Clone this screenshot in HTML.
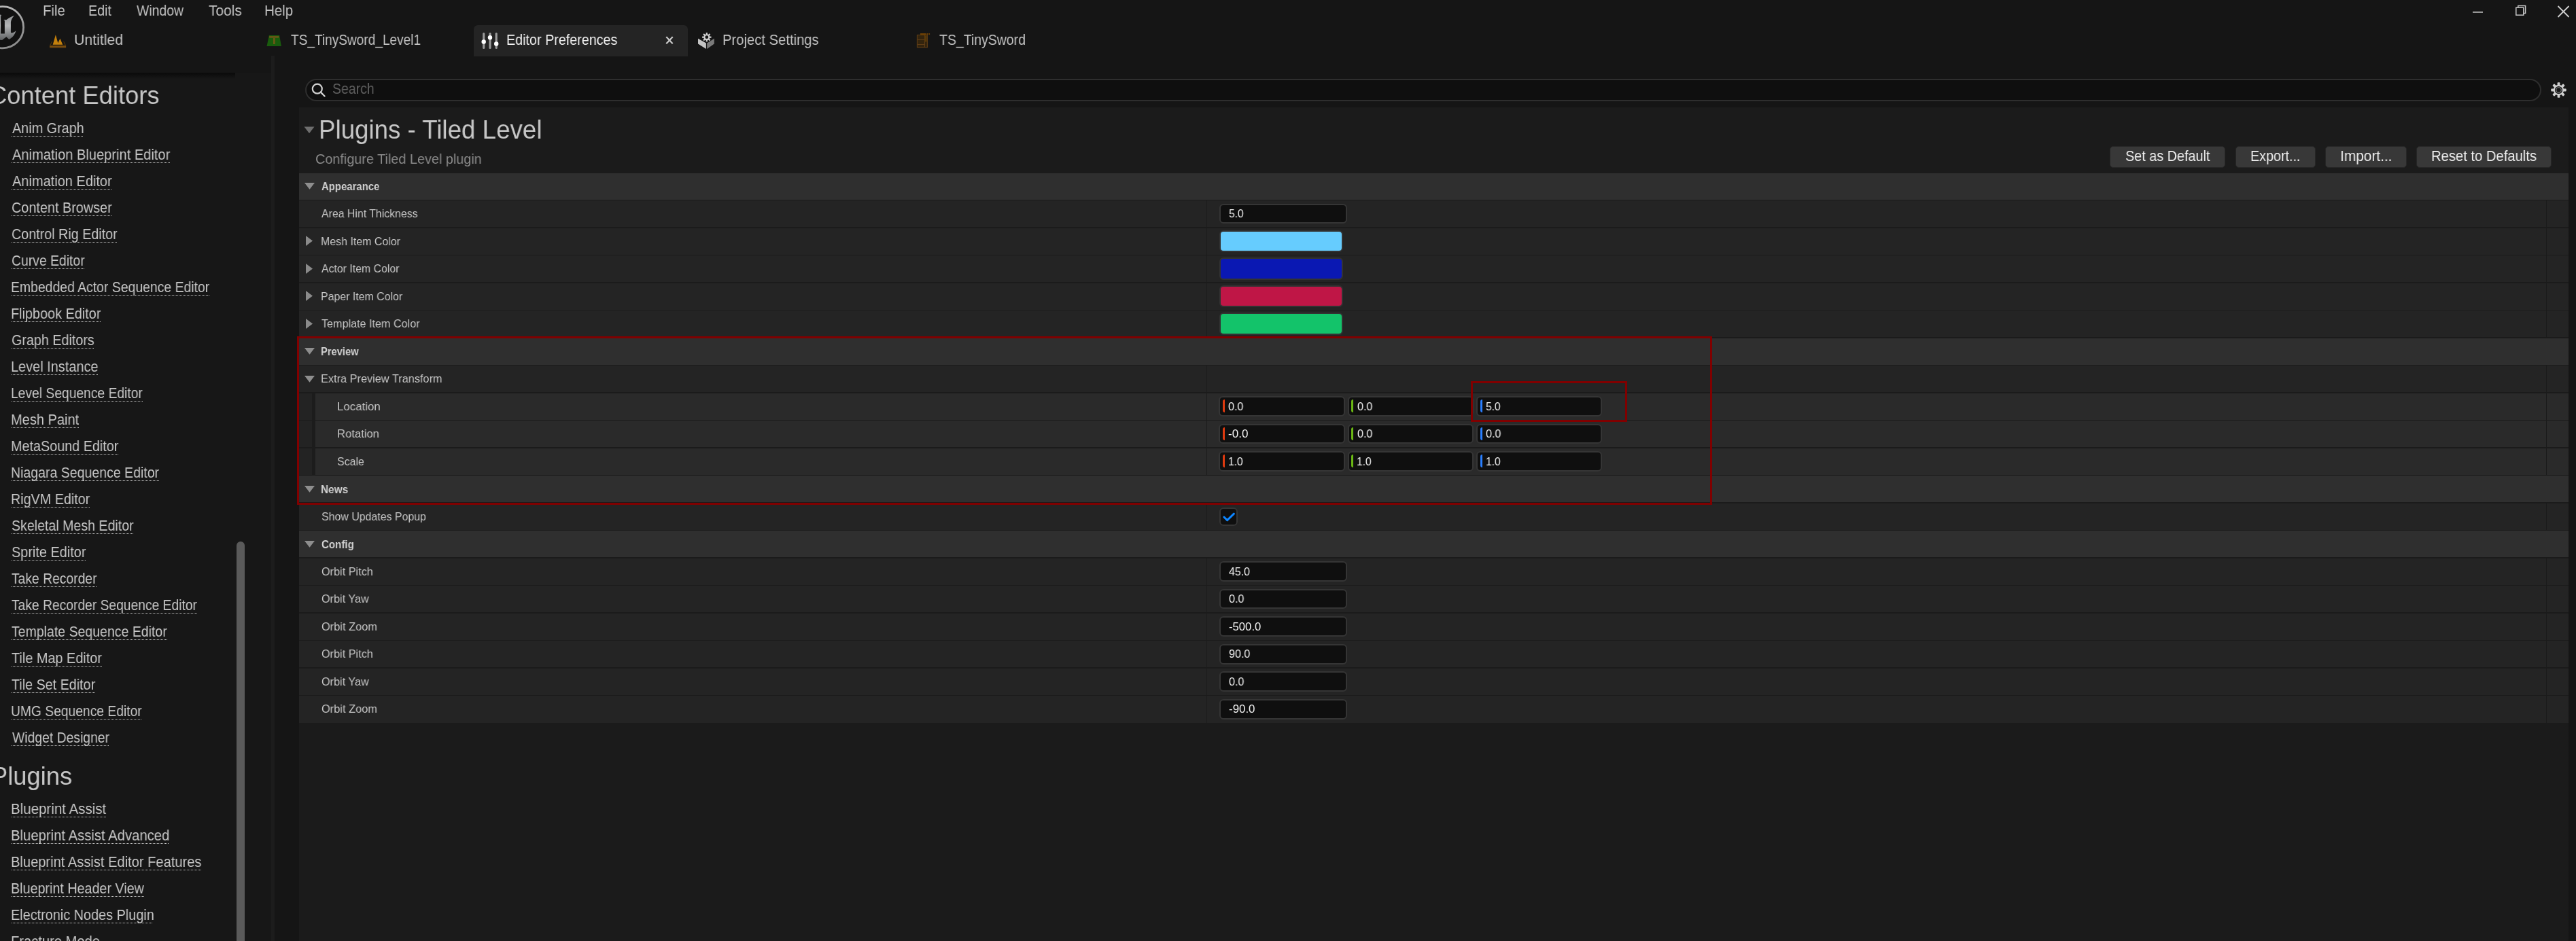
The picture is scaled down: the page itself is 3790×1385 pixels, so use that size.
<!DOCTYPE html>
<html><head><meta charset="utf-8"><title>Editor Preferences</title>
<style>
html,body{margin:0;padding:0;}
body{width:3790px;height:1385px;overflow:hidden;background:#151515;position:relative;font-family:"Liberation Sans",sans-serif;}
.t{position:absolute;white-space:pre;line-height:1;transform-origin:0 0;font-family:"Liberation Sans",sans-serif;will-change:transform;}
.r{position:absolute;}
.a{position:absolute;overflow:visible;}
.u{position:absolute;height:1px;background:repeating-linear-gradient(90deg,#c4c4c4 0 1px,transparent 1px 2px);}
</style></head><body>
<svg class="a" style="left:-30px;top:0px" width="70" height="80" viewBox="-30 0 70 80">
<defs><linearGradient id="ug" x1="0" y1="0" x2="0" y2="1"><stop offset="0" stop-color="#8e9092"/><stop offset="0.45" stop-color="#b4b6b8"/><stop offset="1" stop-color="#5e6163"/></linearGradient>
<linearGradient id="rg" x1="0" y1="0" x2="0.3" y2="1"><stop offset="0" stop-color="#bdbdbd"/><stop offset="1" stop-color="#8d8d8d"/></linearGradient></defs>
<circle cx="4" cy="40.2" r="30.6" fill="#111111" stroke="url(#rg)" stroke-width="2.8"/>
<path d="M-3,21 L2.1,22 L1.1,24.5 L1.1,49.5 L6.9,49.5 L6.9,30.4 L5.3,29 L9.3,29.3 C13,26.5 17,24 21,23 C18.5,25.5 16.5,28.5 15.9,32.5 L15.9,47.5 C16.5,49.5 19.5,48.5 23.4,45.3 C22.5,48.5 21.5,50.5 20.2,52.2 C18,55 15.5,57 13.3,58 L9.3,54.3 L3.2,59 L-3,58.5 Z" fill="url(#ug)"/>
</svg>
<div class="t" style="left:63.12px;top:5.22px;font-size:22.53px;color:#c4c4c4;transform:scaleX(0.9042)">File</div>
<div class="t" style="left:130.22px;top:5.22px;font-size:22.53px;color:#c4c4c4;transform:scaleX(0.8742)">Edit</div>
<div class="t" style="left:201.30px;top:5.22px;font-size:22.53px;color:#c4c4c4;transform:scaleX(0.8628)">Window</div>
<div class="t" style="left:306.58px;top:5.22px;font-size:22.53px;color:#c4c4c4;transform:scaleX(0.9286)">Tools</div>
<div class="t" style="left:389.36px;top:5.22px;font-size:22.53px;color:#c4c4c4;transform:scaleX(0.9107)">Help</div>
<svg class="a" style="left:72px;top:50px" width="27" height="22" viewBox="72 50 27 22">
<defs><linearGradient id="tg" x1="0" y1="0" x2="0" y2="1"><stop offset="0" stop-color="#4a300a"/><stop offset="0.45" stop-color="#7a4e10"/><stop offset="1" stop-color="#6a430d"/></linearGradient></defs>
<path d="M73.1,66.6 L97.1,66.6 L97.1,70.4 L73.1,70.4 Z" fill="url(#tg)"/>
<path d="M73.1,66.8 L76,60.7 L77,60.7 L74.6,66.8 Z" fill="#4f340c"/>
<path d="M97.1,66.8 L94.2,60.9 L93.2,60.9 L95.6,66.8 Z" fill="#4f340c"/>
<path d="M77.7,65.8 L81.9,51.3 L85.3,63.2 L88.4,56.8 L92.3,65.8 Z" fill="#c4800c"/>
</svg>
<div class="t" style="left:109.01px;top:49.29px;font-size:21.51px;color:#c4c4c4;transform:scaleX(0.9884)">Untitled</div>
<svg class="a" style="left:391px;top:50px" width="26" height="20" viewBox="391 50 26 20">
<path d="M395.9,52.1 L411.1,52.1 L413.9,68 L392.5,68 Z" fill="#195c0d"/>
<rect x="396.2" y="53.1" width="14.1" height="2.6" fill="#6a5816"/>
<rect x="402" y="55.7" width="2.8" height="9.3" fill="#6a5816"/>
</svg>
<div class="t" style="left:427.62px;top:49.29px;font-size:21.51px;color:#c4c4c4;transform:scaleX(0.8868)">TS_TinySword_Level1</div>
<div class="r" style="left:697.00px;top:37.00px;width:315.00px;height:46.00px;background:#242424;border-radius:6px 6px 0 0;"></div>
<svg class="a" style="left:705px;top:45px" width="32" height="30" viewBox="705 45 32 30">
<g stroke="#9a9a9a" stroke-width="3.2" stroke-linecap="round"><line x1="711.7" y1="49.5" x2="711.7" y2="70.5"/><line x1="721" y1="49.5" x2="721" y2="70.5"/><line x1="730.2" y1="49.5" x2="730.2" y2="70.5"/></g>
<g fill="#ffffff"><circle cx="711.7" cy="61.5" r="3.2"/><circle cx="721" cy="55.3" r="3.2"/><circle cx="730.2" cy="64.5" r="3.2"/></g>
</svg>
<div class="t" style="left:745.12px;top:49.19px;font-size:21.51px;color:#f2f2f2;transform:scaleX(0.9178)">Editor Preferences</div>
<svg class="a" style="left:977px;top:51px" width="16" height="16" viewBox="977 51 16 16">
<g stroke="#c8c8c8" stroke-width="2.2"><line x1="980.3" y1="54.3" x2="989.7" y2="64.2"/><line x1="989.7" y1="54.3" x2="980.3" y2="64.2"/></g></svg>
<svg class="a" style="left:1025px;top:46px" width="28" height="28" viewBox="1025 46 28 28">
<path d="M1027,56.8 L1038.9,63.6 L1038.9,71.9 L1027,64.4 Z" fill="#c4c4c4"/>
<path d="M1040.2,63.6 L1050.8,56.8 L1050.8,64.4 L1040.2,71.9 Z" fill="#7a7a7a"/>
<g transform="translate(1039.8,54.7)"><g fill="#d0d0d0">
<rect x="-1.1" y="-6.7" width="2.2" height="13.4"/><rect x="-1.1" y="-6.7" width="2.2" height="13.4" transform="rotate(45)"/><rect x="-1.1" y="-6.7" width="2.2" height="13.4" transform="rotate(90)"/><rect x="-1.1" y="-6.7" width="2.2" height="13.4" transform="rotate(135)"/>
<circle r="4.5"/></g><circle r="2.4" fill="#151515"/></g>
</svg>
<div class="t" style="left:1063.38px;top:49.29px;font-size:21.51px;color:#c4c4c4;transform:scaleX(0.9405)">Project Settings</div>
<svg class="a" style="left:1347px;top:48px" width="24" height="24" viewBox="1347 48 24 24">
<rect x="1349.4" y="51.5" width="15" height="18.2" fill="#33240e" stroke="#5e3c16" stroke-width="1.1"/>
<rect x="1354" y="49" width="8.5" height="3" fill="#6a3f05"/><rect x="1363.5" y="49" width="2" height="2" fill="#6a3f05"/><rect x="1366.5" y="49" width="1.6" height="2.2" fill="#6a3f05"/>
<line x1="1350" y1="58.5" x2="1360" y2="58.5" stroke="#5e3c16" stroke-width="1"/><line x1="1350" y1="65.5" x2="1360" y2="65.5" stroke="#5e3c16" stroke-width="1"/>
<line x1="1360.5" y1="52" x2="1360.5" y2="69.5" stroke="#5e3c16" stroke-width="1"/>
<rect x="1360.5" y="52.5" width="3" height="9" fill="#5a3a08"/>
</svg>
<div class="t" style="left:1382.21px;top:49.19px;font-size:21.51px;color:#c4c4c4;transform:scaleX(0.9059)">TS_TinySword</div>
<svg class="a" style="left:3630px;top:0px" width="160" height="34" viewBox="3630 0 160 34">
<line x1="3638" y1="17.9" x2="3653" y2="17.9" stroke="#c8c8c8" stroke-width="1.6"/>
<rect x="3701.8" y="11.2" width="11" height="11" fill="none" stroke="#c8c8c8" stroke-width="1.5"/>
<path d="M3704.8,11.2 L3704.8,8.6 L3715.6,8.6 L3715.6,19.4 L3712.8,19.4" fill="none" stroke="#c8c8c8" stroke-width="1.5"/>
<g stroke="#d0d0d0" stroke-width="1.8"><line x1="3763.5" y1="9" x2="3779.5" y2="25"/><line x1="3779.5" y1="9" x2="3763.5" y2="25"/></g>
</svg>
<div class="r" style="left:0.00px;top:107.00px;width:399.00px;height:1278.00px;background:#171717;"></div>
<div class="r" style="left:0;top:107px;width:346px;height:9px;background:linear-gradient(#0a0a0a,#0d0d0d 25%,#171717);"></div>
<div class="r" style="left:399.00px;top:82.00px;width:5.00px;height:1303.00px;background:#1c1c1c;"></div>
<div class="r" style="left:348.00px;top:797.00px;width:12.00px;height:600.00px;background:#5a5a5a;border-radius:6px;"></div>
<div class="t" style="left:-16.09px;top:122.20px;font-size:37.79px;color:#c8c8c8;transform:scaleX(0.9620)">Content Editors</div>
<div class="t" style="left:-12.57px;top:1123.50px;font-size:37.79px;color:#c8c8c8;transform:scaleX(0.9620)">Plugins</div>
<div class="t" style="left:17.60px;top:178.17px;font-size:22.24px;color:#c8c8c8;transform:scaleX(0.8908)">Anim Graph</div>
<div class="u" style="left:17px;top:200px;width:105px"></div>
<div class="t" style="left:17.60px;top:217.17px;font-size:22.24px;color:#c8c8c8;transform:scaleX(0.9036)">Animation Blueprint Editor</div>
<div class="u" style="left:17px;top:239px;width:233px"></div>
<div class="t" style="left:17.60px;top:256.17px;font-size:22.24px;color:#c8c8c8;transform:scaleX(0.8993)">Animation Editor</div>
<div class="u" style="left:17px;top:278px;width:147px"></div>
<div class="t" style="left:16.61px;top:295.17px;font-size:22.24px;color:#c8c8c8;transform:scaleX(0.8920)">Content Browser</div>
<div class="u" style="left:17px;top:317px;width:147px"></div>
<div class="t" style="left:16.61px;top:334.17px;font-size:22.24px;color:#c8c8c8;transform:scaleX(0.8873)">Control Rig Editor</div>
<div class="u" style="left:17px;top:356px;width:155px"></div>
<div class="t" style="left:16.63px;top:373.17px;font-size:22.24px;color:#c8c8c8;transform:scaleX(0.8715)">Curve Editor</div>
<div class="u" style="left:17px;top:395px;width:107px"></div>
<div class="t" style="left:16.05px;top:412.17px;font-size:22.24px;color:#c8c8c8;transform:scaleX(0.8723)">Embedded Actor Sequence Editor</div>
<div class="u" style="left:17px;top:434px;width:291px"></div>
<div class="t" style="left:16.01px;top:451.17px;font-size:22.24px;color:#c8c8c8;transform:scaleX(0.8925)">Flipbook Editor</div>
<div class="u" style="left:17px;top:473px;width:131px"></div>
<div class="t" style="left:16.61px;top:490.17px;font-size:22.24px;color:#c8c8c8;transform:scaleX(0.8875)">Graph Editors</div>
<div class="u" style="left:17px;top:512px;width:121px"></div>
<div class="t" style="left:16.01px;top:529.17px;font-size:22.24px;color:#c8c8c8;transform:scaleX(0.8965)">Level Instance</div>
<div class="u" style="left:17px;top:551px;width:127px"></div>
<div class="t" style="left:16.06px;top:568.17px;font-size:22.24px;color:#c8c8c8;transform:scaleX(0.8664)">Level Sequence Editor</div>
<div class="u" style="left:17px;top:590px;width:193px"></div>
<div class="t" style="left:16.00px;top:607.17px;font-size:22.24px;color:#c8c8c8;transform:scaleX(0.9003)">Mesh Paint</div>
<div class="u" style="left:17px;top:629px;width:99px"></div>
<div class="t" style="left:16.02px;top:646.17px;font-size:22.24px;color:#c8c8c8;transform:scaleX(0.8897)">MetaSound Editor</div>
<div class="u" style="left:17px;top:668px;width:157px"></div>
<div class="t" style="left:16.04px;top:685.17px;font-size:22.24px;color:#c8c8c8;transform:scaleX(0.8778)">Niagara Sequence Editor</div>
<div class="u" style="left:17px;top:707px;width:217px"></div>
<div class="t" style="left:16.02px;top:724.17px;font-size:22.24px;color:#c8c8c8;transform:scaleX(0.8877)">RigVM Editor</div>
<div class="u" style="left:17px;top:746px;width:115px"></div>
<div class="t" style="left:16.72px;top:763.17px;font-size:22.24px;color:#c8c8c8;transform:scaleX(0.8806)">Skeletal Mesh Editor</div>
<div class="u" style="left:17px;top:785px;width:179px"></div>
<div class="t" style="left:16.70px;top:802.17px;font-size:22.24px;color:#c8c8c8;transform:scaleX(0.8944)">Sprite Editor</div>
<div class="u" style="left:17px;top:824px;width:109px"></div>
<div class="t" style="left:17.21px;top:841.17px;font-size:22.24px;color:#c8c8c8;transform:scaleX(0.8680)">Take Recorder</div>
<div class="u" style="left:17px;top:863px;width:125px"></div>
<div class="t" style="left:17.21px;top:880.17px;font-size:22.24px;color:#c8c8c8;transform:scaleX(0.8659)">Take Recorder Sequence Editor</div>
<div class="u" style="left:17px;top:902px;width:273px"></div>
<div class="t" style="left:17.21px;top:919.17px;font-size:22.24px;color:#c8c8c8;transform:scaleX(0.8770)">Template Sequence Editor</div>
<div class="u" style="left:17px;top:941px;width:229px"></div>
<div class="t" style="left:17.20px;top:958.17px;font-size:22.24px;color:#c8c8c8;transform:scaleX(0.8939)">Tile Map Editor</div>
<div class="u" style="left:17px;top:980px;width:133px"></div>
<div class="t" style="left:17.21px;top:997.17px;font-size:22.24px;color:#c8c8c8;transform:scaleX(0.8870)">Tile Set Editor</div>
<div class="u" style="left:17px;top:1019px;width:123px"></div>
<div class="t" style="left:16.16px;top:1036.17px;font-size:22.24px;color:#c8c8c8;transform:scaleX(0.8662)">UMG Sequence Editor</div>
<div class="u" style="left:17px;top:1058px;width:192px"></div>
<div class="t" style="left:17.50px;top:1075.17px;font-size:22.24px;color:#c8c8c8;transform:scaleX(0.8701)">Widget Designer</div>
<div class="u" style="left:17px;top:1097px;width:143px"></div>
<div class="t" style="left:15.96px;top:1179.67px;font-size:22.24px;color:#c8c8c8;transform:scaleX(0.9220)">Blueprint Assist</div>
<div class="u" style="left:17px;top:1202px;width:139px"></div>
<div class="t" style="left:15.98px;top:1218.67px;font-size:22.24px;color:#c8c8c8;transform:scaleX(0.9120)">Blueprint Assist Advanced</div>
<div class="u" style="left:17px;top:1241px;width:231px"></div>
<div class="t" style="left:15.99px;top:1257.67px;font-size:22.24px;color:#c8c8c8;transform:scaleX(0.9042)">Blueprint Assist Editor Features</div>
<div class="u" style="left:17px;top:1280px;width:279px"></div>
<div class="t" style="left:16.02px;top:1296.67px;font-size:22.24px;color:#c8c8c8;transform:scaleX(0.8870)">Blueprint Header View</div>
<div class="u" style="left:17px;top:1319px;width:195px"></div>
<div class="t" style="left:16.01px;top:1335.67px;font-size:22.24px;color:#c8c8c8;transform:scaleX(0.8929)">Electronic Nodes Plugin</div>
<div class="u" style="left:17px;top:1358px;width:208px"></div>
<div class="t" style="left:15.99px;top:1374.67px;font-size:22.24px;color:#c8c8c8;transform:scaleX(0.9057)">Fracture Mode</div>
<div class="u" style="left:17px;top:1397px;width:129px"></div>
<div class="r" style="left:440.00px;top:158.00px;width:3339.00px;height:1227.00px;background:#1b1b1b;"></div>
<div class="r" style="left:449.00px;top:116.30px;width:3290.00px;height:32.60px;background:#0f0f0f;border:2px solid #2e2e2e;border-radius:17px;box-sizing:border-box;"></div>
<svg class="a" style="left:455px;top:119px" width="28" height="28" viewBox="455 119 28 28">
<circle cx="466.8" cy="130.7" r="7" fill="none" stroke="#d0d0d0" stroke-width="2.2"/>
<line x1="472" y1="135.9" x2="477.6" y2="141.5" stroke="#d0d0d0" stroke-width="2.4" stroke-linecap="round"/></svg>
<div class="t" style="left:489.12px;top:119.56px;font-size:21.66px;color:#606060;transform:scaleX(0.8993)">Search</div>
<svg class="a" style="left:3749.6px;top:117.5px" width="29" height="29" viewBox="-14.5 -14.5 29 29">
<g fill="#cfcfcf"><rect x="-1.9" y="-11.2" width="3.8" height="22.4" rx="0.9"/><rect x="-1.9" y="-11.2" width="3.8" height="22.4" rx="0.9" transform="rotate(45)"/><rect x="-1.9" y="-11.2" width="3.8" height="22.4" rx="0.9" transform="rotate(90)"/><rect x="-1.9" y="-11.2" width="3.8" height="22.4" rx="0.9" transform="rotate(135)"/>
<circle r="7.7"/></g><circle r="5.6" fill="#151515"/><circle r="4.3" fill="#8a8a8a"/><circle r="3.2" fill="#151515"/></svg>
<svg class="a" style="left:446px;top:185px" width="18" height="13" viewBox="446 185 18 13"><path d="M447.5,186.4 L462.5,186.4 L455,196.2 Z" fill="#6e6e6e"/></svg>
<div class="t" style="left:468.86px;top:170.97px;font-size:39.24px;color:#c8c8c8;transform:scaleX(0.9353)">Plugins - Tiled Level</div>
<div class="t" style="left:463.81px;top:223.82px;font-size:20.64px;color:#8c8c8c;transform:scaleX(0.9615)">Configure Tiled Level plugin</div>
<div class="r" style="left:3104.10px;top:214.60px;width:170.40px;height:32.00px;background:#383838;border:1px solid #262626;border-radius:5px;box-sizing:border-box;"></div>
<div class="t" style="left:3127.01px;top:218.87px;font-size:22.24px;color:#f0f0f0;transform:scaleX(0.8907)">Set as Default</div>
<div class="r" style="left:3289.30px;top:214.60px;width:117.50px;height:32.00px;background:#383838;border:1px solid #262626;border-radius:5px;box-sizing:border-box;"></div>
<div class="t" style="left:3311.42px;top:218.87px;font-size:22.24px;color:#f0f0f0;transform:scaleX(0.8867)">Export...</div>
<div class="r" style="left:3421.20px;top:214.60px;width:119.60px;height:32.00px;background:#383838;border:1px solid #262626;border-radius:5px;box-sizing:border-box;"></div>
<div class="t" style="left:3442.82px;top:218.87px;font-size:22.24px;color:#f0f0f0;transform:scaleX(0.9381)">Import...</div>
<div class="r" style="left:3555.00px;top:214.60px;width:198.60px;height:32.00px;background:#383838;border:1px solid #262626;border-radius:5px;box-sizing:border-box;"></div>
<div class="t" style="left:3576.68px;top:218.87px;font-size:22.24px;color:#f0f0f0;transform:scaleX(0.9089)">Reset to Defaults</div>
<div class="r" style="left:440.00px;top:254.60px;width:3339.00px;height:39.02px;background:#2f2f2f;"></div>
<svg class="a" style="left:446.50px;top:268.10px" width="17" height="12" viewBox="0 0 17 12"><path d="M1,1 L16,1 L8.5,10.8 Z" fill="#8e8e8e"/></svg>
<div class="t" style="left:473.03px;top:266.09px;font-size:16.42px;color:#d2d2d2;font-weight:700;transform:scaleX(0.9084)">Appearance</div>
<div class="r" style="left:440.00px;top:295.12px;width:3339.00px;height:39.02px;background:#242424;"></div>
<div class="r" style="left:1775.00px;top:295.12px;width:1.00px;height:39.02px;background:#1b1b1b;"></div>
<div class="r" style="left:3746.00px;top:295.12px;width:1.20px;height:39.02px;background:#1b1b1b;"></div>
<div class="t" style="left:473.40px;top:306.00px;font-size:17.15px;color:#c8c8c8;transform:scaleX(0.9249)">Area Hint Thickness</div>
<div class="r" style="left:1793.70px;top:299.62px;width:188.50px;height:29.60px;background:#0f0f0f;border:2px solid #353535;border-radius:6px;box-sizing:border-box;"></div>
<div class="t" style="left:1807.68px;top:307.09px;font-size:16.57px;color:#f4f4f4;transform:scaleX(0.9408)">5.0</div>
<div class="r" style="left:440.00px;top:335.64px;width:3339.00px;height:39.02px;background:#242424;"></div>
<div class="r" style="left:1775.00px;top:335.64px;width:1.00px;height:39.02px;background:#1b1b1b;"></div>
<div class="r" style="left:3746.00px;top:335.64px;width:1.20px;height:39.02px;background:#1b1b1b;"></div>
<svg class="a" style="left:449.00px;top:346.44px" width="12" height="17" viewBox="0 0 12 17"><path d="M1,1 L11,8.5 L1,16 Z" fill="#8a8a8a"/></svg>
<div class="t" style="left:472.12px;top:346.52px;font-size:17.15px;color:#c8c8c8;transform:scaleX(0.9301)">Mesh Item Color</div>
<div class="r" style="left:1794.30px;top:338.84px;width:182.00px;height:32.40px;background:#66ccfe;border:2px solid #323232;border-radius:6px;box-sizing:border-box;"></div>
<div class="r" style="left:440.00px;top:376.16px;width:3339.00px;height:39.02px;background:#242424;"></div>
<div class="r" style="left:1775.00px;top:376.16px;width:1.00px;height:39.02px;background:#1b1b1b;"></div>
<div class="r" style="left:3746.00px;top:376.16px;width:1.20px;height:39.02px;background:#1b1b1b;"></div>
<svg class="a" style="left:449.00px;top:386.96px" width="12" height="17" viewBox="0 0 12 17"><path d="M1,1 L11,8.5 L1,16 Z" fill="#8a8a8a"/></svg>
<div class="t" style="left:473.40px;top:387.04px;font-size:17.15px;color:#c8c8c8;transform:scaleX(0.9250)">Actor Item Color</div>
<div class="r" style="left:1794.30px;top:379.36px;width:182.00px;height:32.40px;background:#0a18b3;border:2px solid #323232;border-radius:6px;box-sizing:border-box;"></div>
<div class="r" style="left:440.00px;top:416.68px;width:3339.00px;height:39.02px;background:#242424;"></div>
<div class="r" style="left:1775.00px;top:416.68px;width:1.00px;height:39.02px;background:#1b1b1b;"></div>
<div class="r" style="left:3746.00px;top:416.68px;width:1.20px;height:39.02px;background:#1b1b1b;"></div>
<svg class="a" style="left:449.00px;top:427.48px" width="12" height="17" viewBox="0 0 12 17"><path d="M1,1 L11,8.5 L1,16 Z" fill="#8a8a8a"/></svg>
<div class="t" style="left:472.13px;top:427.56px;font-size:17.15px;color:#c8c8c8;transform:scaleX(0.9277)">Paper Item Color</div>
<div class="r" style="left:1794.30px;top:419.88px;width:182.00px;height:32.40px;background:#bf1646;border:2px solid #323232;border-radius:6px;box-sizing:border-box;"></div>
<div class="r" style="left:440.00px;top:457.20px;width:3339.00px;height:39.02px;background:#242424;"></div>
<div class="r" style="left:1775.00px;top:457.20px;width:1.00px;height:39.02px;background:#1b1b1b;"></div>
<div class="r" style="left:3746.00px;top:457.20px;width:1.20px;height:39.02px;background:#1b1b1b;"></div>
<svg class="a" style="left:449.00px;top:468.00px" width="12" height="17" viewBox="0 0 12 17"><path d="M1,1 L11,8.5 L1,16 Z" fill="#8a8a8a"/></svg>
<div class="t" style="left:473.08px;top:468.08px;font-size:17.15px;color:#c8c8c8;transform:scaleX(0.9423)">Template Item Color</div>
<div class="r" style="left:1794.30px;top:460.40px;width:182.00px;height:32.40px;background:#13c36a;border:2px solid #323232;border-radius:6px;box-sizing:border-box;"></div>
<div class="r" style="left:440.00px;top:497.72px;width:3339.00px;height:39.02px;background:#2f2f2f;"></div>
<svg class="a" style="left:446.50px;top:511.22px" width="17" height="12" viewBox="0 0 17 12"><path d="M1,1 L16,1 L8.5,10.8 Z" fill="#8e8e8e"/></svg>
<div class="t" style="left:472.44px;top:509.21px;font-size:16.42px;color:#d2d2d2;font-weight:700;transform:scaleX(0.8953)">Preview</div>
<div class="r" style="left:440.00px;top:538.24px;width:3339.00px;height:39.02px;background:#242424;"></div>
<div class="r" style="left:1775.00px;top:538.24px;width:1.00px;height:39.02px;background:#1b1b1b;"></div>
<div class="r" style="left:3746.00px;top:538.24px;width:1.20px;height:39.02px;background:#1b1b1b;"></div>
<svg class="a" style="left:446.50px;top:551.74px" width="17" height="12" viewBox="0 0 17 12"><path d="M1,1 L16,1 L8.5,10.8 Z" fill="#8e8e8e"/></svg>
<div class="t" style="left:472.09px;top:549.12px;font-size:17.15px;color:#c8c8c8;transform:scaleX(0.9519)">Extra Preview Transform</div>
<div class="r" style="left:440.00px;top:578.76px;width:3339.00px;height:39.02px;background:#232323;"></div>
<div class="r" style="left:459.00px;top:578.76px;width:5.00px;height:40.52px;background:#1c1c1c;"></div>
<div class="r" style="left:464.00px;top:578.76px;width:3315.00px;height:39.02px;background:#2a2a2a;"></div>
<div class="r" style="left:1775.00px;top:578.76px;width:1.00px;height:39.02px;background:#1b1b1b;"></div>
<div class="r" style="left:3746.00px;top:578.76px;width:1.20px;height:39.02px;background:#1b1b1b;"></div>
<div class="t" style="left:495.85px;top:589.64px;font-size:17.15px;color:#c8c8c8;transform:scaleX(0.9832)">Location</div>
<div class="r" style="left:1793.20px;top:583.26px;width:185.60px;height:29.60px;background:#0f0f0f;border:2px solid #353535;border-radius:6px;box-sizing:border-box;"></div>
<div class="r" style="left:1798.60px;top:588.26px;width:3px;height:19px;background:#e03a0f;border-radius:3px 0 0 3px;"></div>
<div class="t" style="left:1807.16px;top:590.73px;font-size:16.57px;color:#f4f4f4;transform:scaleX(0.9730)">0.0</div>
<div class="r" style="left:1982.70px;top:583.26px;width:185.10px;height:29.60px;background:#0f0f0f;border:2px solid #353535;border-radius:6px;box-sizing:border-box;"></div>
<div class="r" style="left:1988.10px;top:588.26px;width:3px;height:19px;background:#6bb814;border-radius:3px 0 0 3px;"></div>
<div class="t" style="left:1996.66px;top:590.73px;font-size:16.57px;color:#f4f4f4;transform:scaleX(0.9730)">0.0</div>
<div class="r" style="left:2172.40px;top:583.26px;width:184.80px;height:29.60px;background:#0f0f0f;border:2px solid #353535;border-radius:6px;box-sizing:border-box;"></div>
<div class="r" style="left:2177.80px;top:588.26px;width:3px;height:19px;background:#2a7fff;border-radius:3px 0 0 3px;"></div>
<div class="t" style="left:2186.38px;top:590.73px;font-size:16.57px;color:#f4f4f4;transform:scaleX(0.9408)">5.0</div>
<div class="r" style="left:440.00px;top:619.28px;width:3339.00px;height:39.02px;background:#232323;"></div>
<div class="r" style="left:459.00px;top:619.28px;width:5.00px;height:40.52px;background:#1c1c1c;"></div>
<div class="r" style="left:464.00px;top:619.28px;width:3315.00px;height:39.02px;background:#2a2a2a;"></div>
<div class="r" style="left:1775.00px;top:619.28px;width:1.00px;height:39.02px;background:#1b1b1b;"></div>
<div class="r" style="left:3746.00px;top:619.28px;width:1.20px;height:39.02px;background:#1b1b1b;"></div>
<div class="t" style="left:495.87px;top:630.16px;font-size:17.15px;color:#c8c8c8;transform:scaleX(0.9707)">Rotation</div>
<div class="r" style="left:1793.20px;top:623.78px;width:185.60px;height:29.60px;background:#0f0f0f;border:2px solid #353535;border-radius:6px;box-sizing:border-box;"></div>
<div class="r" style="left:1798.60px;top:628.78px;width:3px;height:19px;background:#e03a0f;border-radius:3px 0 0 3px;"></div>
<div class="t" style="left:1807.03px;top:631.25px;font-size:16.57px;color:#f4f4f4;transform:scaleX(1.0304)">-0.0</div>
<div class="r" style="left:1982.70px;top:623.78px;width:185.10px;height:29.60px;background:#0f0f0f;border:2px solid #353535;border-radius:6px;box-sizing:border-box;"></div>
<div class="r" style="left:1988.10px;top:628.78px;width:3px;height:19px;background:#6bb814;border-radius:3px 0 0 3px;"></div>
<div class="t" style="left:1996.66px;top:631.25px;font-size:16.57px;color:#f4f4f4;transform:scaleX(0.9730)">0.0</div>
<div class="r" style="left:2172.40px;top:623.78px;width:184.80px;height:29.60px;background:#0f0f0f;border:2px solid #353535;border-radius:6px;box-sizing:border-box;"></div>
<div class="r" style="left:2177.80px;top:628.78px;width:3px;height:19px;background:#2a7fff;border-radius:3px 0 0 3px;"></div>
<div class="t" style="left:2186.36px;top:631.25px;font-size:16.57px;color:#f4f4f4;transform:scaleX(0.9730)">0.0</div>
<div class="r" style="left:440.00px;top:659.80px;width:3339.00px;height:39.02px;background:#232323;"></div>
<div class="r" style="left:459.00px;top:659.80px;width:5.00px;height:40.52px;background:#1c1c1c;"></div>
<div class="r" style="left:464.00px;top:659.80px;width:3315.00px;height:39.02px;background:#2a2a2a;"></div>
<div class="r" style="left:1775.00px;top:659.80px;width:1.00px;height:39.02px;background:#1b1b1b;"></div>
<div class="r" style="left:3746.00px;top:659.80px;width:1.20px;height:39.02px;background:#1b1b1b;"></div>
<div class="t" style="left:496.48px;top:670.68px;font-size:17.15px;color:#c8c8c8;transform:scaleX(0.9314)">Scale</div>
<div class="r" style="left:1793.20px;top:664.30px;width:185.60px;height:29.60px;background:#0f0f0f;border:2px solid #353535;border-radius:6px;box-sizing:border-box;"></div>
<div class="r" style="left:1798.60px;top:669.30px;width:3px;height:19px;background:#e03a0f;border-radius:3px 0 0 3px;"></div>
<div class="t" style="left:1806.63px;top:671.77px;font-size:16.57px;color:#f4f4f4;transform:scaleX(0.9430)">1.0</div>
<div class="r" style="left:1982.70px;top:664.30px;width:185.10px;height:29.60px;background:#0f0f0f;border:2px solid #353535;border-radius:6px;box-sizing:border-box;"></div>
<div class="r" style="left:1988.10px;top:669.30px;width:3px;height:19px;background:#6bb814;border-radius:3px 0 0 3px;"></div>
<div class="t" style="left:1996.13px;top:671.77px;font-size:16.57px;color:#f4f4f4;transform:scaleX(0.9430)">1.0</div>
<div class="r" style="left:2172.40px;top:664.30px;width:184.80px;height:29.60px;background:#0f0f0f;border:2px solid #353535;border-radius:6px;box-sizing:border-box;"></div>
<div class="r" style="left:2177.80px;top:669.30px;width:3px;height:19px;background:#2a7fff;border-radius:3px 0 0 3px;"></div>
<div class="t" style="left:2185.83px;top:671.77px;font-size:16.57px;color:#f4f4f4;transform:scaleX(0.9430)">1.0</div>
<div class="r" style="left:440.00px;top:700.32px;width:3339.00px;height:39.02px;background:#2f2f2f;"></div>
<svg class="a" style="left:446.50px;top:713.82px" width="17" height="12" viewBox="0 0 17 12"><path d="M1,1 L16,1 L8.5,10.8 Z" fill="#8e8e8e"/></svg>
<div class="t" style="left:472.40px;top:711.81px;font-size:16.42px;color:#d2d2d2;font-weight:700;transform:scaleX(0.9382)">News</div>
<div class="r" style="left:440.00px;top:740.84px;width:3339.00px;height:39.02px;background:#242424;"></div>
<div class="r" style="left:1775.00px;top:740.84px;width:1.00px;height:39.02px;background:#1b1b1b;"></div>
<div class="r" style="left:3746.00px;top:740.84px;width:1.20px;height:39.02px;background:#1b1b1b;"></div>
<div class="t" style="left:472.68px;top:751.72px;font-size:17.15px;color:#c8c8c8;transform:scaleX(0.9283)">Show Updates Popup</div>
<div class="r" style="left:1793.60px;top:746.84px;width:27.40px;height:27.60px;background:#0f0f0f;border:2px solid #353535;border-radius:6px;box-sizing:border-box;"></div>
<svg class="a" style="left:1795px;top:750.84px" width="26" height="22" viewBox="1795 750.84 26 22"><path d="M1800.9,760.84 L1805.6,765.54 L1815.4,756.04" fill="none" stroke="#0e86ff" stroke-width="3" stroke-linecap="round" stroke-linejoin="round"/></svg>
<div class="r" style="left:440.00px;top:781.36px;width:3339.00px;height:39.02px;background:#2f2f2f;"></div>
<svg class="a" style="left:446.50px;top:794.86px" width="17" height="12" viewBox="0 0 17 12"><path d="M1,1 L16,1 L8.5,10.8 Z" fill="#8e8e8e"/></svg>
<div class="t" style="left:472.79px;top:792.85px;font-size:16.42px;color:#d2d2d2;font-weight:700;transform:scaleX(0.9212)">Config</div>
<div class="r" style="left:440.00px;top:821.88px;width:3339.00px;height:39.02px;background:#242424;"></div>
<div class="r" style="left:1775.00px;top:821.88px;width:1.00px;height:39.02px;background:#1b1b1b;"></div>
<div class="r" style="left:3746.00px;top:821.88px;width:1.20px;height:39.02px;background:#1b1b1b;"></div>
<div class="t" style="left:472.67px;top:832.76px;font-size:17.15px;color:#c8c8c8;transform:scaleX(0.9472)">Orbit Pitch</div>
<div class="r" style="left:1793.70px;top:826.38px;width:188.50px;height:29.60px;background:#0f0f0f;border:2px solid #353535;border-radius:6px;box-sizing:border-box;"></div>
<div class="t" style="left:1807.98px;top:833.85px;font-size:16.57px;color:#f4f4f4;transform:scaleX(0.9580)">45.0</div>
<div class="r" style="left:440.00px;top:862.40px;width:3339.00px;height:39.02px;background:#242424;"></div>
<div class="r" style="left:1775.00px;top:862.40px;width:1.00px;height:39.02px;background:#1b1b1b;"></div>
<div class="r" style="left:3746.00px;top:862.40px;width:1.20px;height:39.02px;background:#1b1b1b;"></div>
<div class="t" style="left:472.67px;top:873.28px;font-size:17.15px;color:#c8c8c8;transform:scaleX(0.9469)">Orbit Yaw</div>
<div class="r" style="left:1793.70px;top:866.90px;width:188.50px;height:29.60px;background:#0f0f0f;border:2px solid #353535;border-radius:6px;box-sizing:border-box;"></div>
<div class="t" style="left:1807.66px;top:874.37px;font-size:16.57px;color:#f4f4f4;transform:scaleX(0.9730)">0.0</div>
<div class="r" style="left:440.00px;top:902.92px;width:3339.00px;height:39.02px;background:#242424;"></div>
<div class="r" style="left:1775.00px;top:902.92px;width:1.00px;height:39.02px;background:#1b1b1b;"></div>
<div class="r" style="left:3746.00px;top:902.92px;width:1.20px;height:39.02px;background:#1b1b1b;"></div>
<div class="t" style="left:472.66px;top:913.80px;font-size:17.15px;color:#c8c8c8;transform:scaleX(0.9553)">Orbit Zoom</div>
<div class="r" style="left:1793.70px;top:907.42px;width:188.50px;height:29.60px;background:#0f0f0f;border:2px solid #353535;border-radius:6px;box-sizing:border-box;"></div>
<div class="t" style="left:1807.55px;top:914.89px;font-size:16.57px;color:#f4f4f4;transform:scaleX(1.0077)">-500.0</div>
<div class="r" style="left:440.00px;top:943.44px;width:3339.00px;height:39.02px;background:#242424;"></div>
<div class="r" style="left:1775.00px;top:943.44px;width:1.00px;height:39.02px;background:#1b1b1b;"></div>
<div class="r" style="left:3746.00px;top:943.44px;width:1.20px;height:39.02px;background:#1b1b1b;"></div>
<div class="t" style="left:472.67px;top:954.32px;font-size:17.15px;color:#c8c8c8;transform:scaleX(0.9472)">Orbit Pitch</div>
<div class="r" style="left:1793.70px;top:947.94px;width:188.50px;height:29.60px;background:#0f0f0f;border:2px solid #353535;border-radius:6px;box-sizing:border-box;"></div>
<div class="t" style="left:1807.58px;top:955.41px;font-size:16.57px;color:#f4f4f4;transform:scaleX(0.9708)">90.0</div>
<div class="r" style="left:440.00px;top:983.96px;width:3339.00px;height:39.02px;background:#242424;"></div>
<div class="r" style="left:1775.00px;top:983.96px;width:1.00px;height:39.02px;background:#1b1b1b;"></div>
<div class="r" style="left:3746.00px;top:983.96px;width:1.20px;height:39.02px;background:#1b1b1b;"></div>
<div class="t" style="left:472.67px;top:994.84px;font-size:17.15px;color:#c8c8c8;transform:scaleX(0.9469)">Orbit Yaw</div>
<div class="r" style="left:1793.70px;top:988.46px;width:188.50px;height:29.60px;background:#0f0f0f;border:2px solid #353535;border-radius:6px;box-sizing:border-box;"></div>
<div class="t" style="left:1807.66px;top:995.93px;font-size:16.57px;color:#f4f4f4;transform:scaleX(0.9730)">0.0</div>
<div class="r" style="left:440.00px;top:1024.48px;width:3339.00px;height:39.32px;background:#242424;"></div>
<div class="r" style="left:1775.00px;top:1024.48px;width:1.00px;height:39.32px;background:#1b1b1b;"></div>
<div class="r" style="left:3746.00px;top:1024.48px;width:1.20px;height:39.32px;background:#1b1b1b;"></div>
<div class="t" style="left:472.66px;top:1035.36px;font-size:17.15px;color:#c8c8c8;transform:scaleX(0.9553)">Orbit Zoom</div>
<div class="r" style="left:1793.70px;top:1028.98px;width:188.50px;height:29.60px;background:#0f0f0f;border:2px solid #353535;border-radius:6px;box-sizing:border-box;"></div>
<div class="t" style="left:1807.54px;top:1036.45px;font-size:16.57px;color:#f4f4f4;transform:scaleX(1.0205)">-90.0</div>
<div class="r" style="left:436.70px;top:494.50px;width:2082.80px;height:248.00px;background:transparent;border:3px solid #800000;box-sizing:border-box;"></div>
<div class="r" style="left:2163.60px;top:560.60px;width:230.60px;height:60.60px;background:transparent;border:3px solid #800000;box-sizing:border-box;"></div>
</body></html>
